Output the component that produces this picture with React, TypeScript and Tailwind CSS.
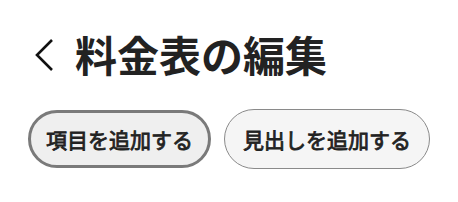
import React from 'react';

const App: React.FC = () => {
  return (
    <div className="w-[458px] h-[202px] bg-white font-['Noto_Sans_CJK_JP',sans-serif] text-[#222]">
      <div className="flex items-center h-[80px] pt-[28px] pl-[34px]">
        <svg width="20" height="34" viewBox="0 0 20 34" className="shrink-0 mt-[2px]">
          <polyline points="18,2 3,17 18,32" fill="none" stroke="#111" strokeWidth="2.6" />
        </svg>
        <h1 className="ml-[21px] text-[42px] leading-none font-bold">料金表の編集</h1>
      </div>
      <div className="flex items-center gap-[13px] pl-[28px] pt-[29px]">
        <button className="h-[58px] px-[15px] rounded-full border-[3px] border-[#7a7a7a] bg-[#efefef] text-[21px] font-normal leading-none [-webkit-text-stroke:0.8px_#222]">
          項目を追加する
        </button>
        <button className="h-[60px] px-[18px] rounded-full border border-[#8a8a8a] bg-[#f5f5f5] text-[21px] font-normal leading-none [-webkit-text-stroke:0.8px_#222]">
          見出しを追加する
        </button>
      </div>
    </div>
  );
};

export default App;
